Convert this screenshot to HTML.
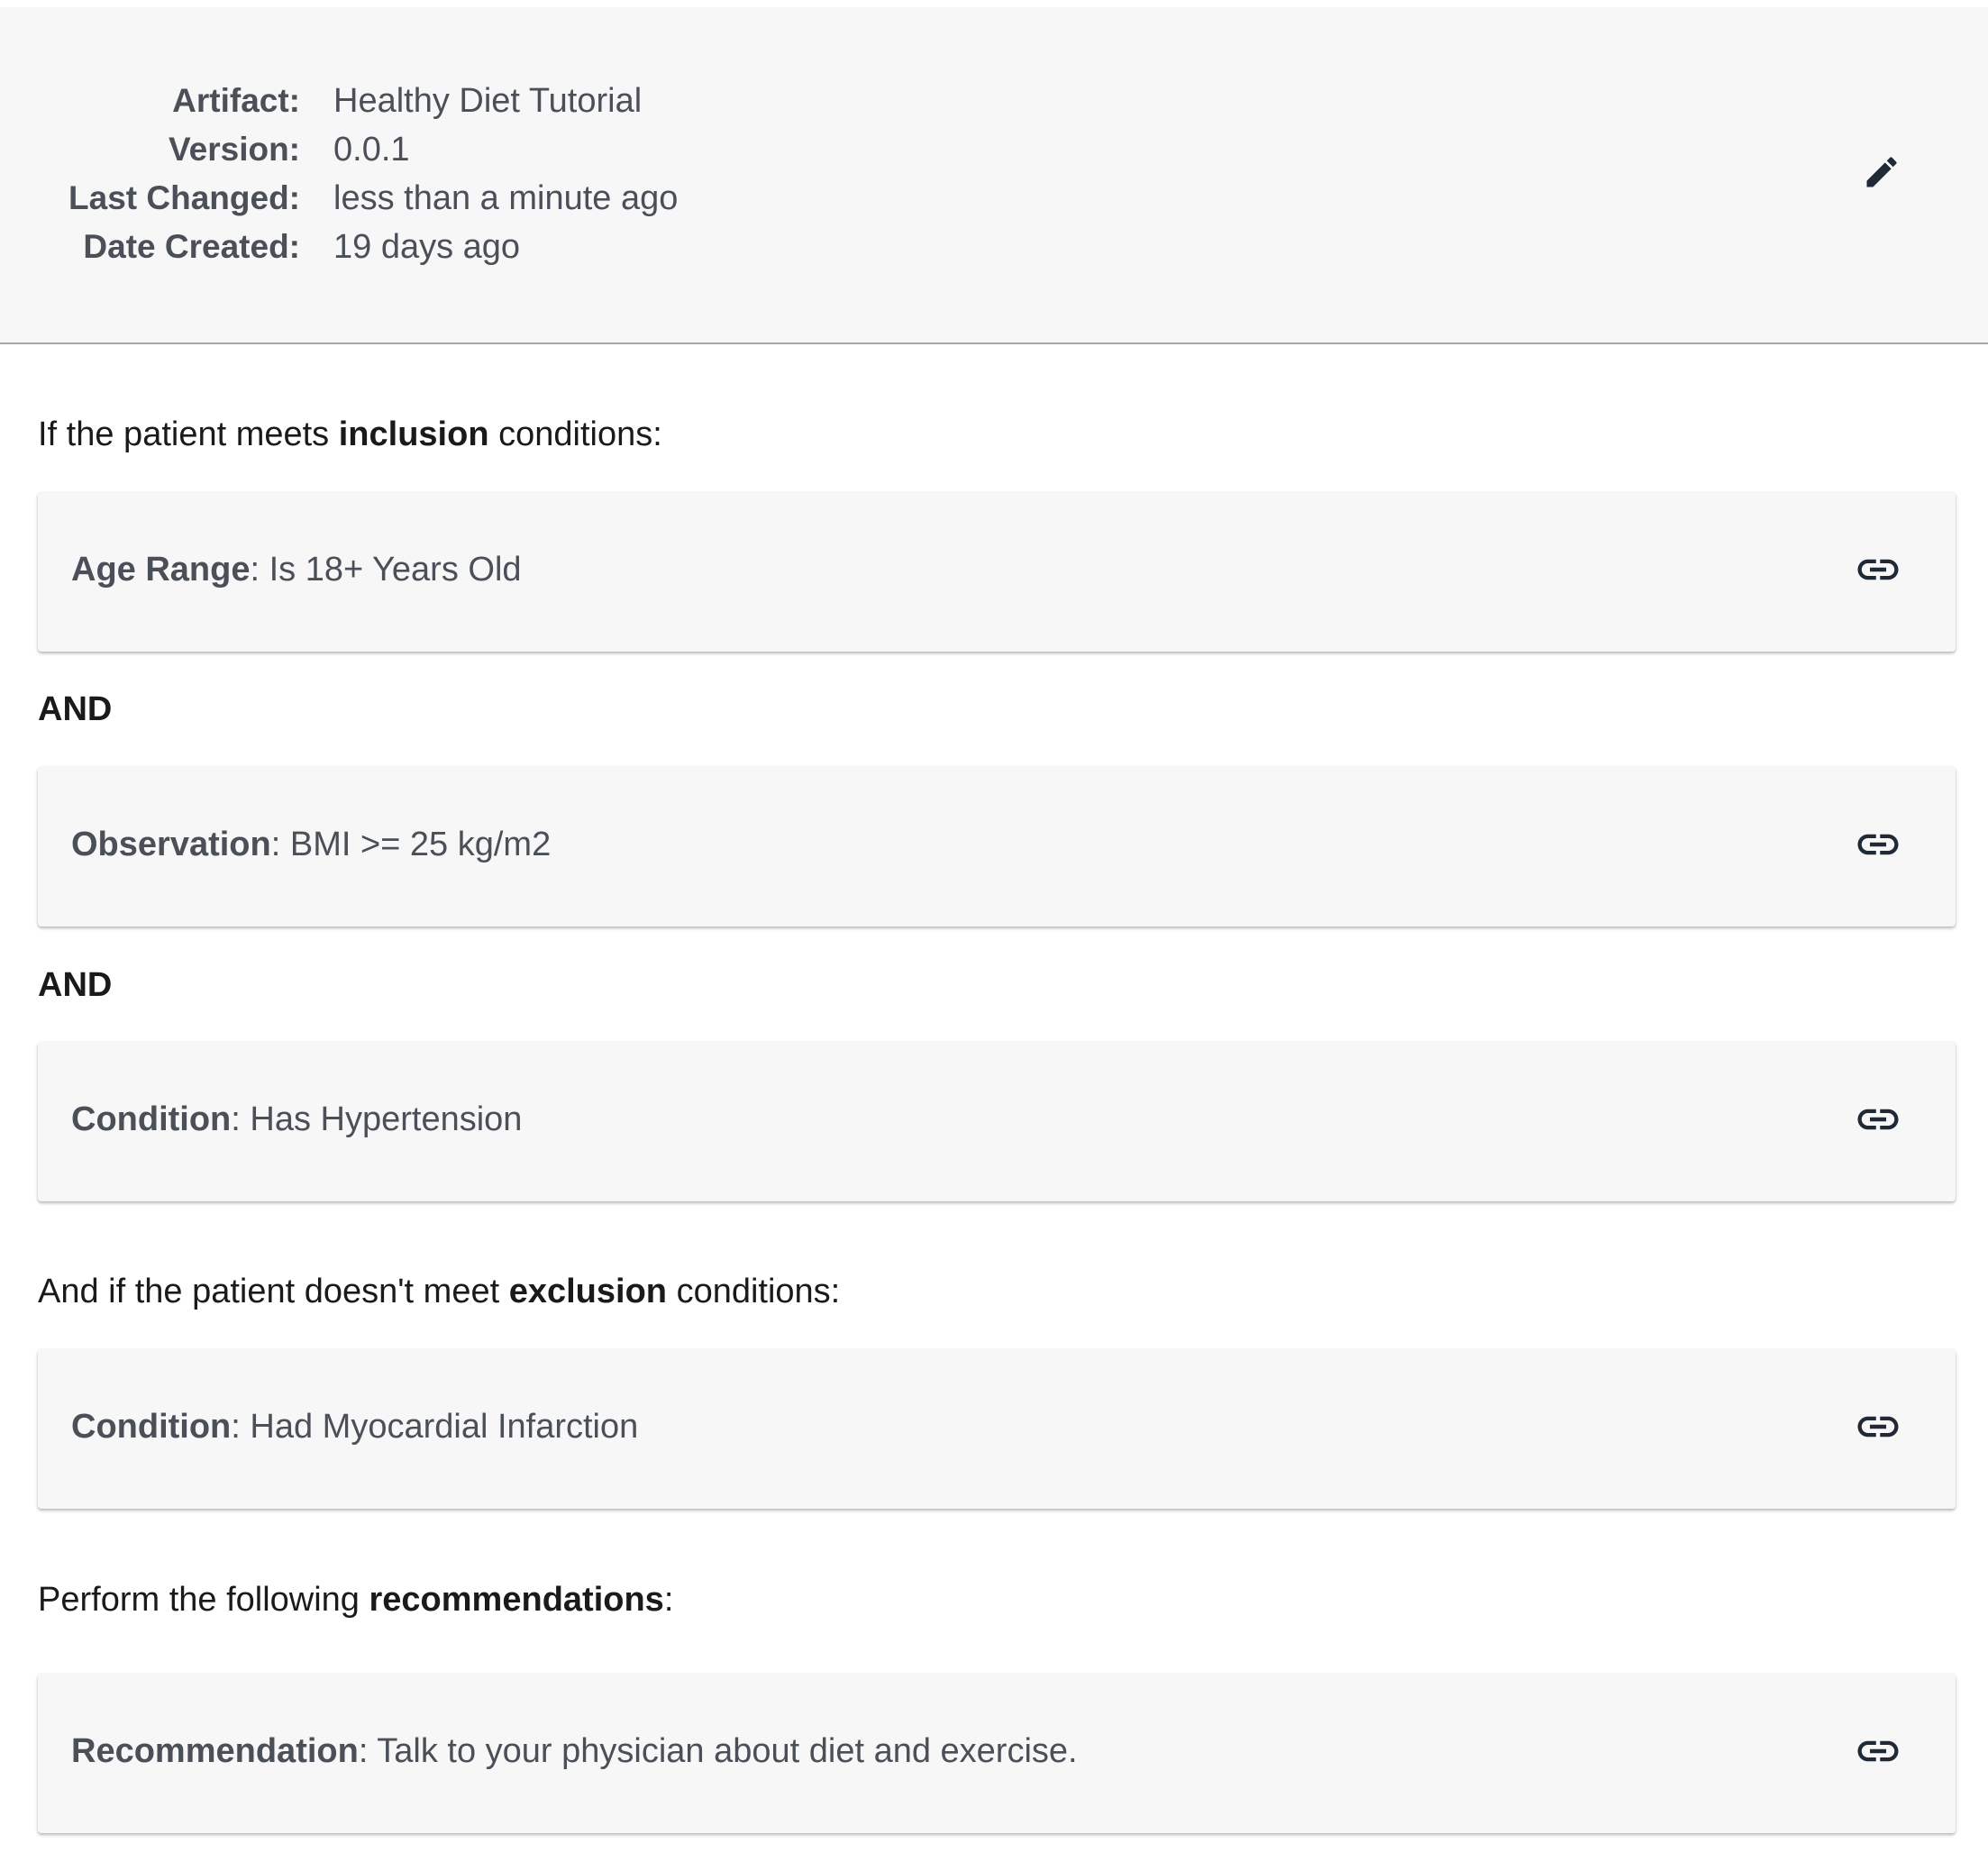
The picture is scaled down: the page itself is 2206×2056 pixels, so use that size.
<!DOCTYPE html>
<html><head><meta charset="utf-8"><style>
html,body{margin:0;padding:0;background:#fff;width:2206px;height:2056px;overflow:hidden;font-family:"Liberation Sans",sans-serif;}
.hdr{position:absolute;left:0;top:8px;width:2206px;height:372px;background:#f7f7f7;border-bottom:2px solid #a8a8a8;}
.lab{position:absolute;width:333px;left:0;text-align:right;font-weight:bold;height:50px;line-height:50px;font-size:37px;color:#4a4f58;white-space:nowrap;}
.val{position:absolute;left:370px;height:50px;line-height:50px;font-size:38px;color:#4a4f58;white-space:nowrap;}
.t{position:absolute;left:42px;height:50px;line-height:50px;font-size:38px;color:#1a1a1a;white-space:nowrap;}
.card{position:absolute;left:42px;width:2128px;height:177px;background:#f7f7f7;border-radius:4px;box-shadow:0 2px 3px rgba(0,0,0,0.28),0 0 2px rgba(0,0,0,0.06);}
.card .c{position:absolute;left:37px;top:61px;height:50px;line-height:50px;font-size:38px;color:#4a4f58;white-space:nowrap;}
.card svg{position:absolute;left:2015px;top:59px;}
b{font-weight:bold;}
</style></head><body>
<div class="hdr">
<div class="lab" style="top:79px">Artifact:</div><div class="val" style="top:79px">Healthy Diet Tutorial</div>
<div class="lab" style="top:133px">Version:</div><div class="val" style="top:133px">0.0.1</div>
<div class="lab" style="top:187px">Last Changed:</div><div class="val" style="top:187px">less than a minute ago</div>
<div class="lab" style="top:241px">Date Created:</div><div class="val" style="top:241px">19 days ago</div>
<svg style="position:absolute;left:2066px;top:161px" width="44" height="44" viewBox="0 0 24 24"><path fill="#1f2a36" d="M3 17.25V21h3.75L17.81 9.94l-3.75-3.75L3 17.25zM20.71 7.04a1 1 0 000-1.41l-2.34-2.34a1 1 0 00-1.41 0l-1.83 1.83 3.75 3.75 1.83-1.83z"/></svg>
</div>

<div class="t" style="top:457px">If the patient meets <b>inclusion</b> conditions:</div>
<div class="card" style="top:546px"><div class="c"><b>Age Range</b>: Is 18+ Years Old</div><svg width="54" height="54" viewBox="0 0 24 24"><path fill="#1f2a36" d="M3.9 12c0-1.71 1.39-3.1 3.1-3.1h4V7H7c-2.76 0-5 2.24-5 5s2.24 5 5 5h4v-1.9H7c-1.71 0-3.1-1.39-3.1-3.1zM8 13h8v-2H8v2zm9-6h-4v1.9h4c1.71 0 3.1 1.39 3.1 3.1s-1.39 3.1-3.1 3.1h-4V17h4c2.76 0 5-2.24 5-5s-2.24-5-5-5z"/></svg></div>
<div class="t" style="top:762px;font-weight:bold">AND</div>
<div class="card" style="top:851px"><div class="c"><b>Observation</b>: BMI &gt;= 25 kg/m2</div><svg width="54" height="54" viewBox="0 0 24 24"><path fill="#1f2a36" d="M3.9 12c0-1.71 1.39-3.1 3.1-3.1h4V7H7c-2.76 0-5 2.24-5 5s2.24 5 5 5h4v-1.9H7c-1.71 0-3.1-1.39-3.1-3.1zM8 13h8v-2H8v2zm9-6h-4v1.9h4c1.71 0 3.1 1.39 3.1 3.1s-1.39 3.1-3.1 3.1h-4V17h4c2.76 0 5-2.24 5-5s-2.24-5-5-5z"/></svg></div>
<div class="t" style="top:1068px;font-weight:bold">AND</div>
<div class="card" style="top:1156px"><div class="c"><b>Condition</b>: Has Hypertension</div><svg width="54" height="54" viewBox="0 0 24 24"><path fill="#1f2a36" d="M3.9 12c0-1.71 1.39-3.1 3.1-3.1h4V7H7c-2.76 0-5 2.24-5 5s2.24 5 5 5h4v-1.9H7c-1.71 0-3.1-1.39-3.1-3.1zM8 13h8v-2H8v2zm9-6h-4v1.9h4c1.71 0 3.1 1.39 3.1 3.1s-1.39 3.1-3.1 3.1h-4V17h4c2.76 0 5-2.24 5-5s-2.24-5-5-5z"/></svg></div>

<div class="t" style="top:1408px">And if the patient doesn't meet <b>exclusion</b> conditions:</div>
<div class="card" style="top:1497px"><div class="c"><b>Condition</b>: Had Myocardial Infarction</div><svg width="54" height="54" viewBox="0 0 24 24"><path fill="#1f2a36" d="M3.9 12c0-1.71 1.39-3.1 3.1-3.1h4V7H7c-2.76 0-5 2.24-5 5s2.24 5 5 5h4v-1.9H7c-1.71 0-3.1-1.39-3.1-3.1zM8 13h8v-2H8v2zm9-6h-4v1.9h4c1.71 0 3.1 1.39 3.1 3.1s-1.39 3.1-3.1 3.1h-4V17h4c2.76 0 5-2.24 5-5s-2.24-5-5-5z"/></svg></div>

<div class="t" style="top:1750px">Perform the following <b>recommendations</b>:</div>
<div class="card" style="top:1857px"><div class="c"><b>Recommendation</b>: Talk to your physician about diet and exercise.</div><svg width="54" height="54" viewBox="0 0 24 24"><path fill="#1f2a36" d="M3.9 12c0-1.71 1.39-3.1 3.1-3.1h4V7H7c-2.76 0-5 2.24-5 5s2.24 5 5 5h4v-1.9H7c-1.71 0-3.1-1.39-3.1-3.1zM8 13h8v-2H8v2zm9-6h-4v1.9h4c1.71 0 3.1 1.39 3.1 3.1s-1.39 3.1-3.1 3.1h-4V17h4c2.76 0 5-2.24 5-5s-2.24-5-5-5z"/></svg></div>
</body></html>
